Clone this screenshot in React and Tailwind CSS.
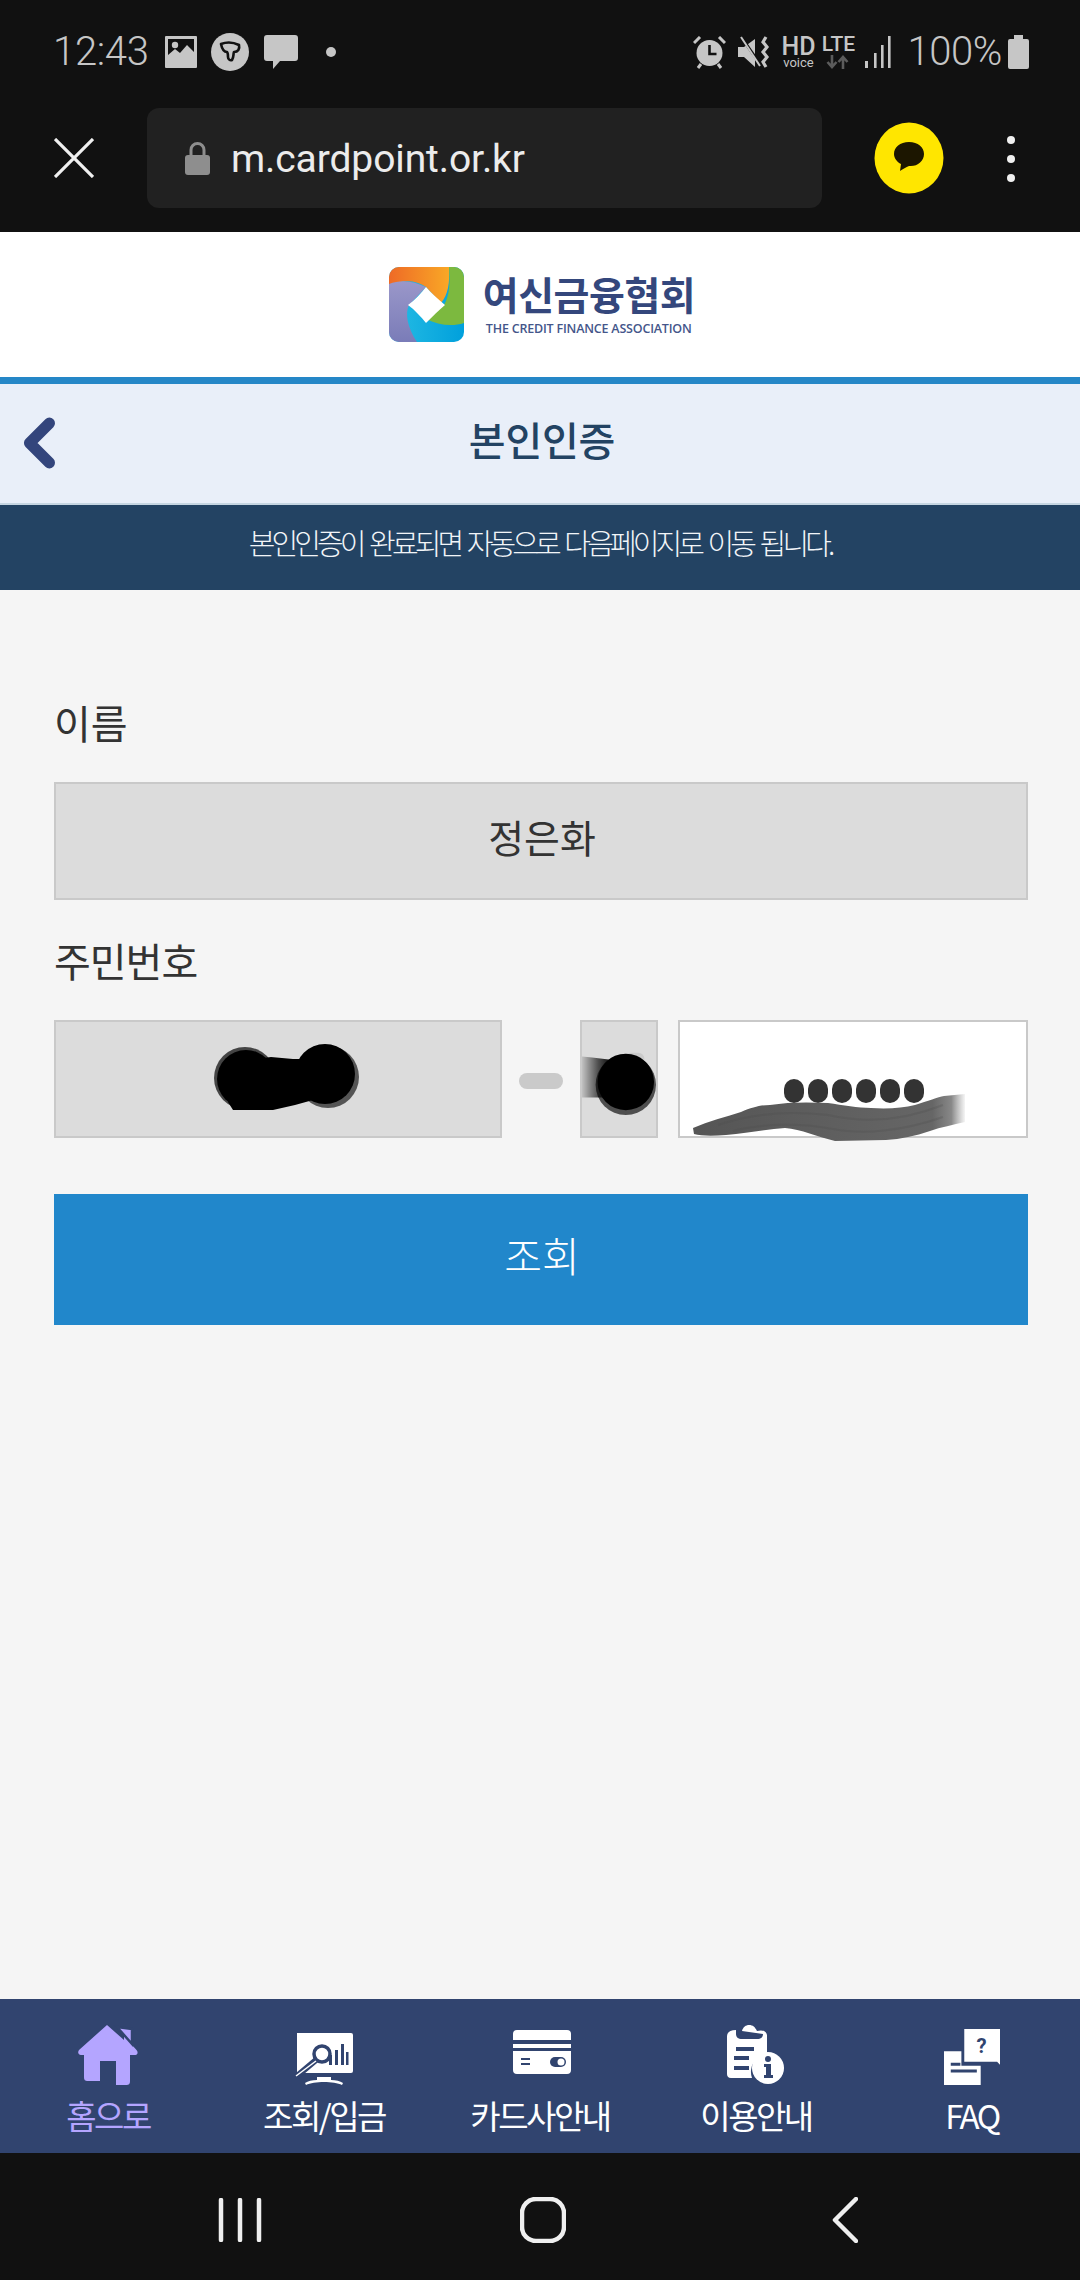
import React from "react";

const KR = { fontFamily: '"Noto Sans CJK KR", "Noto Sans", sans-serif' };

function StatusLeft() {
  return (
    <div className="flex items-center">
      <span className="text-[40px] leading-none text-[#c6c6c6] font-['Roboto',sans-serif] font-light tracking-[-0.3px] w-[112px]">12:43</span>
      <svg width="32" height="32" viewBox="0 0 32 32"><path fill="#c6c6c6" fillRule="evenodd" d="M1 0h30a1 1 0 0 1 1 1v30a1 1 0 0 1-1 1H1a1 1 0 0 1-1-1V1a1 1 0 0 1 1-1zM3 3v16l7-6 5 4 7-8 7 7V3z" /><circle cx="10" cy="9" r="3.2" fill="#c6c6c6" /></svg>
      <svg width="38" height="38" viewBox="0 0 38 38" className="ml-[14px]"><circle cx="19" cy="19" r="19" fill="#c6c6c6" /><path fill="#c6c6c6" stroke="#111" strokeWidth="2.6" strokeLinejoin="round" d="M10 11c5-2 12-2 18 1 1 4-1 7-5 7-1 3 0 5-2 8-2 1-4-1-4-3 0-2 0-4-1-5-3 0-5-3-6-8z" /></svg>
      <svg width="34" height="34" viewBox="0 0 34 34" className="ml-[15px]"><path fill="#c6c6c6" d="M3 0h28a3 3 0 0 1 3 3v20a3 3 0 0 1-3 3H16l-7 8v-8H3a3 3 0 0 1-3-3V3a3 3 0 0 1 3-3z" /></svg>
      <span className="ml-[28px] w-[10px] h-[10px] rounded-full bg-[#c6c6c6]" />
    </div>
  );
}

function StatusRight() {
  return (
    <div className="flex items-center">
      <svg width="33" height="33" viewBox="0 0 33 33"><circle cx="16.5" cy="17" r="13" fill="#c6c6c6" /><path d="M16.5 9v9h7" fill="none" stroke="#111" strokeWidth="2.6" /><path d="M1 7l6-6M32 7l-6-6M5 32l3-4M28 32l-3-4" stroke="#c6c6c6" strokeWidth="3" fill="none" /></svg>
      <svg width="33" height="33" viewBox="0 0 33 33" className="ml-[12px]"><path fill="#c6c6c6" d="M0 11h6L17 3v28L6 21H0z" /><path d="M4 2l20 29" stroke="#111" strokeWidth="3" /><path d="M3 1l19 29" stroke="#c6c6c6" strokeWidth="2" /><path d="M28 1l-3 5 4 5-4 5 4 5-4 5 3 5" fill="none" stroke="#c6c6c6" strokeWidth="3.2" /></svg>
      <div className="ml-[10px] w-[34px] flex flex-col items-center font-['Roboto',sans-serif] text-[#c6c6c6] leading-none">
        <span className="text-[25px] font-medium leading-[21px]">HD</span>
        <span className="text-[13px] leading-[11px]">voice</span>
      </div>
      <div className="ml-[7px] w-[32px] flex flex-col items-center font-['Roboto',sans-serif] leading-none">
        <span className="text-[21px] text-[#c6c6c6] font-medium leading-[18px]">LTE</span>
        <svg width="24" height="14" viewBox="0 0 24 14" className="mt-[2px]"><path d="M6 0v11M1.5 7l4.5 5 4.5-5M17 14V3M12.500 7L17 2l4.500 5" fill="none" stroke="#5c5c5c" strokeWidth="2.6" /></svg>
      </div>
      <svg width="30" height="32" viewBox="0 0 28 32" className="ml-[8px]"><path d="M2 25h3v7H2zM11 17h2.600v15H11zM18 9h2.600v23H18zM25 0h2.600v32H25z" fill="#c6c6c6" /></svg>
      <span className="ml-[15px] text-[40px] leading-none text-[#c6c6c6] font-['Roboto',sans-serif] font-light tracking-[-0.4px]">100%</span>
      <svg width="21" height="34" viewBox="0 0 21 34" className="ml-[6px]"><path fill="#c6c6c6" d="M6 0h9v4h4a2 2 0 0 1 2 2v26a2 2 0 0 1-2 2H2a2 2 0 0 1-2-2V6a2 2 0 0 1 2-2h4z" /></svg>
    </div>
  );
}

function LogoMark() {
  return (
    <svg width="75" height="75" viewBox="0 0 75 75">
      <defs>
        <linearGradient id="lo" x1="0" x2="1" y1="0" y2="0"><stop offset="0" stopColor="#ee6a26" /><stop offset="1" stopColor="#f9a826" /></linearGradient>
        <linearGradient id="lp" x1="0" x2="0" y1="0" y2="1"><stop offset="0" stopColor="#9a97c9" /><stop offset="1" stopColor="#7a7cb8" /></linearGradient>
        <linearGradient id="lb" x1="0" x2="1" y1="0" y2="0"><stop offset="0" stopColor="#27bde4" /><stop offset="1" stopColor="#00a0dc" /></linearGradient>
        <clipPath id="lc"><rect width="75" height="75" rx="10" /></clipPath>
      </defs>
      <g clipPath="url(#lc)">
        <rect width="75" height="75" fill="url(#lb)" />
        <path d="M0 0h60c1 16-1 28-8 36L37 20C26 12 12 13 0 19z" fill="url(#lo)" />
        <path d="M60 0h15v56c-12 4-26 2-38-4l18-14C61 28 61 14 60 0z" fill="#7cb93f" />
        <path d="M0 17c12-5 25-3 37 3L20 38c-4 8-2 22 8 37H0z" fill="url(#lp)" />
        <path d="M37 20c5 6 12 12 19 18-6 5-12 11-19 18-5-6-11-13-18-18 7-5 13-12 18-18z" fill="#fff" />
      </g>
    </svg>
  );
}

function Blob1() {
  return (
    <svg width="148" height="68" viewBox="0 0 148 68">
      <circle cx="116" cy="33" r="31" fill="#555" />
      <circle cx="33" cy="34" r="31" fill="#444" />
      <circle cx="34" cy="35" r="29" fill="#000" />
      <circle cx="113" cy="30" r="30" fill="#000" />
      <path d="M16 58l5 8h40l22-5 18-5V15l-20 0-22-2-30 4z" fill="#000" />
    </svg>
  );
}

function Blob2() {
  return (
    <svg width="76" height="74" viewBox="0 0 76 74">
      <defs><linearGradient id="bf" x1="0" x2="1" y1="0" y2="0"><stop offset="0" stopColor="#000" stopOpacity="0.12" /><stop offset="0.4" stopColor="#000" stopOpacity="0.65" /><stop offset="0.75" stopColor="#000" /></linearGradient></defs>
      <rect x="44" y="10" width="20" height="14" rx="6" fill="#cbcbcb" />
      <circle cx="45" cy="43" r="31" fill="#4e4e4e" />
      <circle cx="45" cy="40" r="29" fill="#000" />
      <path d="M0 14c14 1 28 4 42 4v38H0z" fill="url(#bf)" />
    </svg>
  );
}

function Brush() {
  return (
    <svg width="274" height="50" viewBox="0 0 274 50">
      <defs><linearGradient id="br" x1="0" x2="1" y1="0" y2="0"><stop offset="0" stopColor="#555" /><stop offset="0.88" stopColor="#666" /><stop offset="0.95" stopColor="#888" /><stop offset="1" stopColor="#999" stopOpacity="0.1" /></linearGradient></defs>
      <path fill="url(#br)" d="M0 35C16 28 32 24 48 19C60 14 68 12 77 12C95 9 115 9 135 10C150 12 165 15 178 15C195 16 210 15 222 12C235 8 245 4 251 3L272 1L272 29C260 32 248 34 237 38C222 43 208 46 193 47L142 48C125 44 108 36 92 35C75 36 55 40 33 42C20 43 8 43 1 41Z" />
      <path d="M25 32C60 20 100 18 135 22C170 30 210 28 250 12M40 38C70 30 110 30 140 36C170 42 210 38 250 24" fill="none" stroke="#4a4a4a" strokeWidth="2" opacity="0.25" />
    </svg>
  );
}

const navItems = [
  { label: "홈으로", active: true, icon: <svg width="60" height="60" viewBox="0 0 60 60"><path fill="#b4a5ff" d="M29 0l17 15V4h4c3 0 4 1 4 4v12l4.500 5c2 2 1 5-1 5H52v26c0 3-1 4-4 4H38V36H22v20H10c-3 0-4-1-4-4V30H3c-3 0-3.500-3-2-5z" /><path d="M39 2l15 17V4z" fill="#b4a5ff" stroke="#31446f" strokeWidth="2.500" /></svg> },
  { label: "조회/입금", icon: <svg width="58" height="52" viewBox="0 0 58 52"><path fill="#fff" d="M2 0h54a2 2 0 0 1 2 2v36a2 2 0 0 1-2 2H2z" /><circle cx="27" cy="21" r="8" fill="#fff" stroke="#31446f" strokeWidth="3.500" /><path d="M21 27L2 43" stroke="#31446f" strokeWidth="6" /><path d="M21 28L1 43" stroke="#fff" strokeWidth="1.500" /><path d="M34 22h3v10h-3zM40 17h3v15h-3zM46 11h3v21h-3zM51 19h2.500v13H51z" fill="#31446f" /><path d="M22 44h14v3c5 0 9 1 12 3l-1 2c-8-4-28-4-36 0l-1-2c3-2 7-3 12-3z" fill="#fff" /></svg> },
  { label: "카드사안내", lift: true, icon: <svg width="58" height="44" viewBox="0 0 58 44"><path fill="#fff" d="M4 0h50a4 4 0 0 1 4 4v6H0V4a4 4 0 0 1 4-4zM0 14h58v4H0zM0 21h58v19a4 4 0 0 1-4 4H4a4 4 0 0 1-4-4z" /><path d="M8 28h9v2H8zM8 33h9v2H8z" fill="#31446f" /><rect x="37" y="27" width="16" height="10" rx="5" fill="#31446f" /><circle cx="48" cy="32" r="3.500" fill="#fff" /></svg> },
  { label: "이용안내", icon: <svg width="58" height="60" viewBox="0 0 58 60"><path fill="#fff" d="M15 6c1-4 4-6 7-6 4 0 6 2 8 6 4-1 9-1 10 4v19a18 18 0 0 0-15 24H4c-3 0-4-2-4-4V12c0-5 3-7 9-7v4c0 3 2 5 6 5h15c4 0 6-2 6-5" /><path d="M9 22h18v4H9zM7 31h15v4H7zM7 41h15v4H7z" fill="#31446f" /><circle cx="41" cy="43" r="16" fill="#fff" /><circle cx="41" cy="34" r="3" fill="#31446f" /><path d="M37 39h7v11h2v3h-9v-3h2v-8h-2z" fill="#31446f" /></svg> },
  { label: "FAQ", icon: <svg width="58" height="56" viewBox="0 0 58 58"><path fill="#fff" d="M21 0h37v37l-3-3H21z" /><text x="39" y="25" textAnchor="middle" fontSize="21" fontWeight="700" fontFamily="Roboto, sans-serif" fill="#31446f">?</text><path fill="#fff" d="M0 23h18v15h20v20H3l-3 3z" /><path d="M7 35h10v3H7zM7 42h27v3H7z" fill="#31446f" /></svg> },
];

export default function App() {
  return (
    <div className="w-[1080px] h-[2280px] flex flex-col bg-[#f5f5f5] overflow-hidden" style={KR}>
      <div className="h-[106px] bg-[#111111] flex items-center justify-between pl-[53px] pr-[51px] pb-[2px]">
        <StatusLeft />
        <StatusRight />
      </div>

      <div className="h-[126px] bg-[#111111] flex items-start pt-[2px]">
        <div className="w-[147px] h-[100px] flex items-center pl-[54px]">
          <svg width="40" height="40" viewBox="0 0 40 40"><path d="M1 1l38 38M39 1L1 39" stroke="#f0f0f0" strokeWidth="3.200" /></svg>
        </div>
        <div className="w-[675px] h-[100px] bg-[#212121] rounded-[12px] flex items-center pl-[38px]">
          <svg width="25" height="33" viewBox="0 0 25 33"><path d="M6 14V8a6.500 6.500 0 0 1 13 0v6" fill="none" stroke="#8e8e8e" strokeWidth="3" /><rect y="13" width="25" height="20" rx="3" fill="#8e8e8e" /></svg>
          <span className="ml-[21px] mt-[2px] text-[39px] leading-none text-[#ececec] font-['Roboto',sans-serif] tracking-[-0.1px]">m.cardpoint.or.kr</span>
        </div>
        <div className="ml-[52px] w-[70px] h-[100px] flex items-center">
          <svg width="70" height="72" viewBox="0 0 70 72"><ellipse cx="35" cy="36" rx="34.500" ry="35.500" fill="#ffe600" /><path fill="#1c1600" d="M35 20c9 0 15 5 15 12s-7 13-15 12c-3 1-6 3-9 5l1-7c-4-2-7-6-7-10 0-7 6-12 15-12z" /></svg>
        </div>
        <div className="ml-[63px] flex flex-col gap-[11px] h-[100px] justify-center pt-[2px]">
          <span className="w-[8px] h-[8px] rounded-full bg-[#f0f0f0]" />
          <span className="w-[8px] h-[8px] rounded-full bg-[#f0f0f0]" />
          <span className="w-[8px] h-[8px] rounded-full bg-[#f0f0f0]" />
        </div>
      </div>

      <div className="h-[145px] bg-white flex items-center justify-center pl-[4px]">
        <LogoMark />
        <div className="ml-[19px] flex flex-col items-start">
          <span className="text-[39px] leading-[46px] font-bold text-[#34477c] tracking-[-0.5px] font-['Liberation_Sans','Noto_Sans_CJK_KR',sans-serif]">여신금융협회</span>
          <span className="ml-[3px] mt-[2px] text-[12.500px] leading-[14px] font-semibold text-[#44568a] font-['Open_Sans',sans-serif] tracking-[-0.2px]">THE CREDIT FINANCE ASSOCIATION</span>
        </div>
      </div>

      <div className="h-[7px] bg-[#2587c7]" />

      <div className="relative h-[121px] bg-[#e9eff9] border-b-[2px] border-[#c6d6e2] flex items-center justify-center">
        <svg width="32" height="52" viewBox="0 0 34 54" className="absolute left-[23px] top-[33px]"><path d="M28 6L7 27l21 21" fill="none" stroke="#33457c" strokeWidth="12" strokeLinecap="round" strokeLinejoin="round" /></svg>
        <span className="text-[40px] leading-none text-[#234363] font-medium tracking-[-0.2px] pl-[4px] pb-[10px]">본인인증</span>
      </div>

      <div className="h-[85px] bg-[#234363] flex items-center justify-center">
        <span className="text-[29px] leading-none text-[#f2f5f8] font-light tracking-[-3.900px] [word-spacing:4px] pb-[10px]">본인인증이 완료되면 자동으로 다음페이지로 이동 됩니다.</span>
      </div>

      <div className="flex-1 flex flex-col pl-[54px] pr-[52px] pt-[104px]">
        <label className="text-[40px] leading-[56px] text-[#333333]">이름</label>
        <div className="mt-[32px] h-[118px] bg-[#dcdcdc] border-[2px] border-[#c9c9c9] flex items-center justify-center text-[39px] text-[#333333] pb-[9px] pl-[2px]">정은화</div>
        <label className="mt-[32px] text-[40px] leading-[56px] text-[#333333] tracking-[-1px]">주민번호</label>
        <div className="mt-[32px] h-[118px] flex items-center">
          <div className="w-[448px] h-full bg-[#dcdcdc] border-[2px] border-[#c9c9c9] flex items-center justify-center pb-[2px] pl-[16px]">
            <Blob1 />
          </div>
          <span className="mt-[4px] ml-[17px] w-[44px] h-[16px] rounded-[8px] bg-[#cacaca]" />
          <div className="ml-[17px] w-[78px] h-full bg-[#dcdcdc] border-[2px] border-[#c9c9c9] flex items-center">
            <Blob2 />
          </div>
          <div className="relative ml-[20px] flex-1 h-full bg-white border-[2px] border-[#c9c9c9] flex items-start justify-center pt-[57px] pl-[2px]">
            <div className="flex gap-[4px]">
              {[0, 1, 2, 3, 4, 5].map((i) => <span key={i} className="w-[20px] h-[24px] rounded-full bg-[#333333]" />)}
            </div>
            <div className="absolute left-[13px] top-[71px]"><Brush /></div>
          </div>
        </div>
        <div className="mt-[56px] h-[131px] bg-[#2187cb] flex items-center justify-center text-[41px] text-white font-light pb-[10px] pl-[2px]">조회</div>
      </div>

      <div className="h-[154px] bg-[#31446f] grid grid-cols-5">
        {navItems.map((n) => (
          <div key={n.label} className="flex flex-col items-center">
            <div className={`h-[92px] w-full flex items-end justify-center ${n.lift ? "pb-[17px] pl-[3px]" : "pb-[6px]"}`}>{n.icon}</div>
            <span className={`text-[33px] leading-[48px] tracking-[-2.500px] ${n.active ? "text-[#b4a5ff]" : "text-white"}`}>{n.label}</span>
          </div>
        ))}
      </div>

      <div className="h-[127px] bg-[#111111] flex items-center pl-[218px] pt-[6px]">
        <svg width="44" height="44" viewBox="0 0 44 44"><path d="M3 2v40M22 2v40M41 2v40" stroke="#efefef" strokeWidth="4.500" strokeLinecap="round" /></svg>
        <svg width="46" height="46" viewBox="0 0 46 46" className="ml-[258px]"><rect x="2" y="2" width="42" height="42" rx="14" fill="none" stroke="#efefef" strokeWidth="4.500" /></svg>
        <svg width="26" height="46" viewBox="0 0 26 46" className="ml-[266px]"><path d="M24 2L3 23l21 21" fill="none" stroke="#efefef" strokeWidth="4.500" strokeLinecap="round" strokeLinejoin="round" /></svg>
      </div>
    </div>
  );
}
